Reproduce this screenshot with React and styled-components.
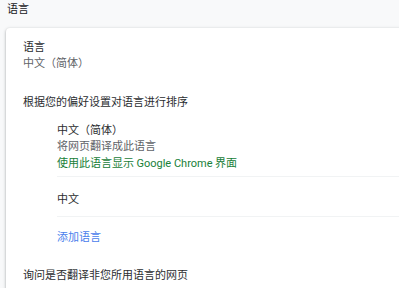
import React from 'react';
import styled, { createGlobalStyle } from 'styled-components';

const GlobalStyle = createGlobalStyle`
  html, body {
    margin: 0;
    padding: 0;
    background: #f8f9fa;
    overflow: hidden;
  }
  body {
    font-family: "Noto Sans CJK SC", "Noto Sans", Roboto, sans-serif;
    font-size: 11px;
    line-height: 16px;
    color: #202124;
  }
`;

const Page = styled.div`
  height: 288px;
  padding-left: 6px;
  overflow: hidden;
`;

const Header = styled.h2`
  margin: 0;
  height: 28px;
  padding-left: 1px;
  font-size: 11px;
  font-weight: 400;
  line-height: 16px;
  color: #202124;
`;

const Card = styled.div`
  margin-right: -10px;
  background: #fff;
  border-radius: 4px;
  box-shadow: 0 1px 2px rgba(60, 64, 67, 0.3), 0 1px 3px 1px rgba(60, 64, 67, 0.15);
  padding: 10px 0 20px 17px;
  min-height: 280px;
`;

const Text = styled.div`
  height: 16px;
  color: ${(p) => p.$color || '#2b2d30'};
  margin-top: ${(p) => p.$top || 0}px;
  white-space: nowrap;
`;

const Latin = styled.span`
  font-family: Roboto, sans-serif;
`;

const LangList = styled.div`
  margin-left: 34px;
  margin-top: 12px;
`;

const LangItem = styled.div`
  display: flex;
  flex-direction: column;
  padding: ${(p) => p.$pad};
  border-bottom: 1px solid #f1f3f4;
`;

const AddLink = styled.div`
  color: #4a80ec;
  padding-top: 11px;
  height: 16px;
`;

export default function App() {
  return (
    <>
      <GlobalStyle />
      <Page>
        <Header>语言</Header>
        <Card>
          <Text>语言</Text>
          <Text $color="#5f6368">中文（简体）</Text>
          <Text $top={23}>根据您的偏好设置对语言进行排序</Text>
          <LangList>
            <LangItem $pad="0 0 6px 0">
              <Text>中文（简体）</Text>
              <Text $color="#5f6368">将网页翻译成此语言</Text>
              <Text $color="#188038" $top={1}>
                使用此语言显示 <Latin>Google Chrome</Latin> 界面
              </Text>
            </LangItem>
            <LangItem $pad="13px 0 10px 0">
              <Text>中文</Text>
            </LangItem>
            <AddLink>添加语言</AddLink>
          </LangList>
          <Text $top={22}>询问是否翻译非您所用语言的网页</Text>
        </Card>
      </Page>
    </>
  );
}
